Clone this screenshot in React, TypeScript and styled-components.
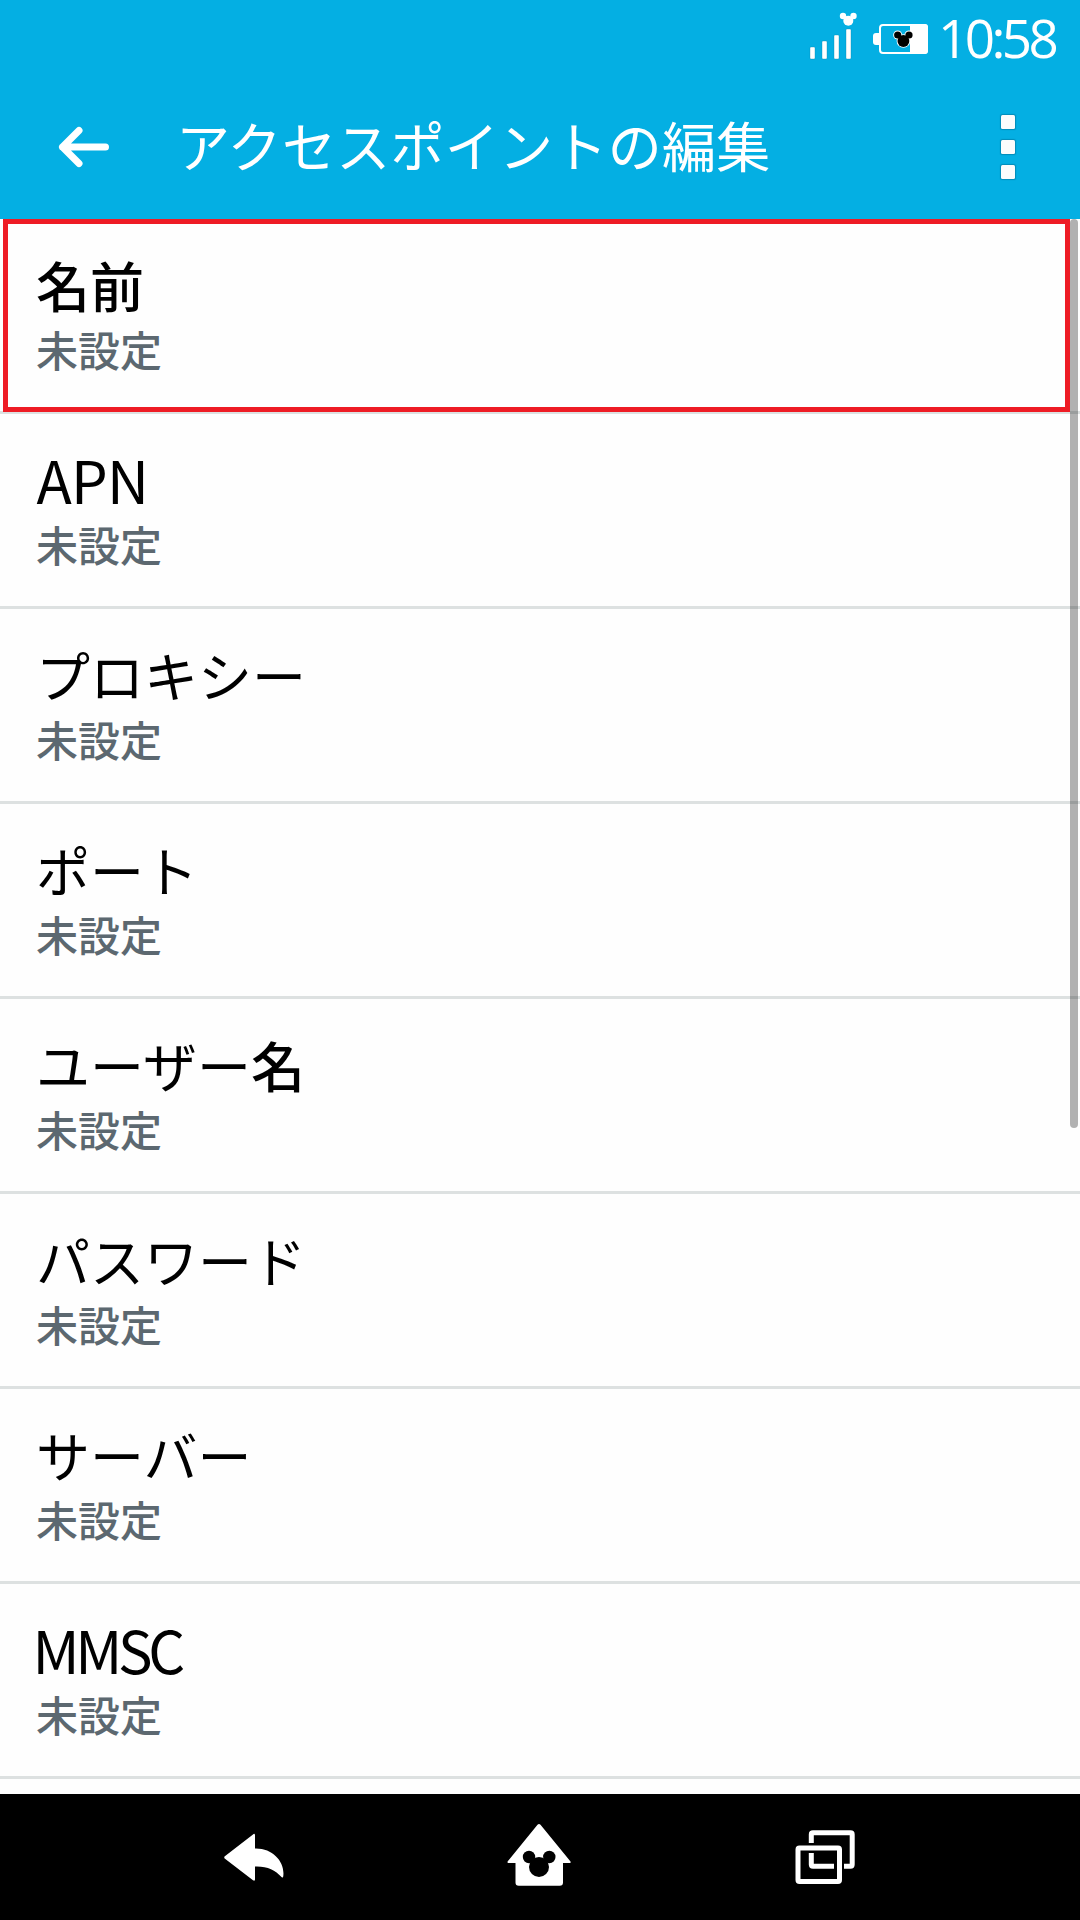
import React from "react";
import styled, { createGlobalStyle } from "styled-components";

const GlobalStyle = createGlobalStyle`
  html, body { margin: 0; padding: 0; background: #fefefe; }
  * { box-sizing: border-box; }
`;

const jp = `"Noto Sans CJK JP", "Noto Sans", sans-serif`;

const Screen = styled.div`
  display: flex;
  flex-direction: column;
  width: 1080px;
  height: 1920px;
  overflow: hidden;
  background: #fefefe;
  font-family: ${jp};
`;

const Header = styled.header`
  display: flex;
  flex-direction: column;
  flex: none;
  height: 219px;
  background: #04afe3;
  color: #fff;
`;

const StatusBar = styled.div`
  display: flex;
  align-items: flex-start;
  justify-content: flex-end;
  height: 74px;
  padding-right: 20px;
`;

const StatusIcons = styled.svg`
  display: block;
  flex: none;
`;

const Clock = styled.span`
  width: 123px;
  padding-left: 1px;
  font-family: "Open Sans", sans-serif;
  font-size: 53px;
  font-weight: 400;
  line-height: 76px;
  letter-spacing: -3.6px;
  white-space: nowrap;
`;

const TitleBar = styled.div`
  display: flex;
  align-items: center;
  height: 145px;
  padding: 0 65px 0 56px;
`;

const BackButton = styled.button`
  display: flex;
  width: 56px;
  height: 56px;
  padding: 0;
  border: 0;
  background: none;
`;

const Title = styled.h1`
  flex: 1;
  margin: 0 0 4px 64px;
  font-size: 54px;
  font-weight: 400;
  line-height: 64px;
  letter-spacing: 0.3px;
  white-space: nowrap;
`;

const MenuButton = styled.button`
  display: flex;
  flex-direction: column;
  gap: 11px;
  padding: 0;
  margin-top: 1px;
  border: 0;
  background: none;
`;

const Dot = styled.span`
  width: 14px;
  height: 14px;
  border-radius: 1.5px;
  background: #fcfcfc;
  box-shadow: 0 0 1px 1px rgba(0, 60, 90, 0.3);
`;

const List = styled.main`
  position: relative;
  flex: 1;
  min-height: 0;
  overflow: hidden;
`;

const Row = styled.div`
  display: flex;
  flex-direction: column;
  height: 195px;
  padding: 34px 36px 0;
  border-bottom: 3px solid #dde1e1;
`;

const Name = styled.span<{ $latin?: boolean; $spacing?: number; $shift?: number }>`
  margin-left: ${(p) => p.$shift ?? 0}px;
  margin-top: ${(p) => (p.$latin ? -1 : 0)}px;
  margin-bottom: ${(p) => (p.$latin ? 1 : 0)}px;
  font-size: ${(p) => (p.$latin ? 58 : 54)}px;
  line-height: 64px;
  letter-spacing: ${(p) => p.$spacing ?? 0}px;
  color: #000;
  white-space: nowrap;
`;

const Kanji = styled.span`
  font-weight: 500;
`;

const Value = styled.span`
  font-size: 42px;
  font-weight: 500;
  line-height: 64px;
  color: #5c6870;
  white-space: nowrap;
`;

const Highlight = styled.div`
  position: absolute;
  top: 0;
  left: 3px;
  width: 1067px;
  height: 193px;
  border: 5px solid #ee1c25;
`;

const ScrollThumb = styled.div`
  position: absolute;
  top: 0;
  right: 2px;
  width: 8px;
  height: 909px;
  border-radius: 4px;
  background: rgba(0, 0, 0, 0.3);
`;

const NavBar = styled.nav`
  display: flex;
  flex: none;
  justify-content: space-between;
  height: 126px;
  padding: 30px 223px 0 222px;
  background: #000;
`;

const NavButton = styled.button`
  display: flex;
  width: 64px;
  height: 64px;
  padding: 0;
  border: 0;
  background: none;
`;

const HomeButton = styled(NavButton)`
  margin-right: 1px;
`;

type Item = { name: string; kanji?: string; latin?: boolean; spacing?: number; shift?: number };

const items: Item[] = [
  { name: "", kanji: "名前" },
  { name: "APN", latin: true, spacing: -0.8, shift: 0.5 },
  { name: "プロキシー" },
  { name: "ポート" },
  { name: "ユーザー", kanji: "名" },
  { name: "パスワード" },
  { name: "サーバー" },
  { name: "MMSC", latin: true, spacing: -4.3, shift: -3.5 },
];

const bars = [
  { x: 20, y: 47 },
  { x: 32, y: 41 },
  { x: 44, y: 35 },
  { x: 56, y: 29 },
];

export default function App() {
  return (
    <Screen>
      <GlobalStyle />
      <Header>
        <StatusBar>
          <StatusIcons width="147" height="74" viewBox="0 0 147 74">
            <g fill="#fff" stroke="#0782a8" strokeOpacity="0.45" strokeWidth="0.8">
              {bars.map((b) => (
                <rect key={b.x} x={b.x} y={b.y} width="5" height={59 - b.y} rx="1" />
              ))}
            </g>
            <g fill="#fff">
              <circle cx="53" cy="16" r="3.2" />
              <circle cx="63.5" cy="16" r="3.2" />
              <circle cx="58.3" cy="20.7" r="5" />
            </g>
            <rect x="90" y="25" width="47" height="28" rx="3" fill="none" stroke="#fff" strokeWidth="2" />
            <path d="M120 24h15a3 3 0 0 1 3 3v24a3 3 0 0 1-3 3h-15z" fill="#fff" />
            <path d="M90 33h-4a3 3 0 0 0-3 3v6a3 3 0 0 0 3 3h4z" fill="#fff" />
            <g fill="#fff">
              <circle cx="107.7" cy="35" r="4.5" />
              <circle cx="119" cy="35" r="4.5" />
              <circle cx="113.4" cy="41" r="6.8" />
            </g>
            <g fill="#000">
              <circle cx="107.7" cy="35" r="3.6" />
              <circle cx="119" cy="35" r="3.6" />
              <circle cx="113.4" cy="41" r="5.9" />
            </g>
          </StatusIcons>
          <Clock>10:58</Clock>
        </StatusBar>
        <TitleBar>
          <BackButton aria-label="戻る">
            <svg width="56" height="56" viewBox="0 0 56 56">
              <path
                d="M23 12.5 6.5 29 23 45.5M6.5 29h43"
                transform="translate(0 -1)"
                fill="none"
                stroke="#fff"
                strokeWidth="7"
                strokeLinecap="round"
                strokeLinejoin="round"
              />
            </svg>
          </BackButton>
          <Title>アクセスポイントの編集</Title>
          <MenuButton aria-label="メニュー">
            <Dot />
            <Dot />
            <Dot />
          </MenuButton>
        </TitleBar>
      </Header>

      <List>
        {items.map((item) => (
          <Row key={item.name}>
            <Name $latin={item.latin} $spacing={item.spacing} $shift={item.shift}>
              {item.name}
              {item.kanji && <Kanji>{item.kanji}</Kanji>}
            </Name>
            <Value>未設定</Value>
          </Row>
        ))}
        <Highlight />
        <ScrollThumb />
      </List>

      <NavBar>
        <NavButton aria-label="戻る">
          <svg width="64" height="64" viewBox="0 0 64 64">
            <path
              d="M2.5 32.5 Q1.8 33.8 3 34.8 L31 56.3 Q33 57.3 33 55.5 V42.5 C45 42 53 46 59.5 53 Q61 54.5 61.3 52 C63 38 51 24 33 24.5 V11 Q32.6 9 31 10.5 Z"
              fill="#fff"
            />
          </svg>
        </NavButton>
        <HomeButton aria-label="ホーム">
          <svg width="64" height="64" viewBox="0 0 64 64">
            <path
              d="M30.5 .8Q32 -.8 33.5 .8L63.5 37.5Q64 39 62.5 39H56V58.5Q56 61.8 52.7 61.8H11.8Q8.5 61.8 8.5 58.5V39H1.5Q0 39 .6 37.5Z"
              fill="#fff"
            />
            <circle cx="22" cy="33" r="6.2" />
            <circle cx="42.3" cy="33" r="6.2" />
            <circle cx="32" cy="43" r="10" />
          </svg>
        </HomeButton>
        <NavButton aria-label="最近使ったアプリ">
          <svg width="64" height="64" viewBox="0 0 64 64" fill="none" stroke="#fff" strokeWidth="5">
            <rect x="5" y="24" width="41.5" height="33.5" rx="1.5" />
            <path d="M18.3 19V10.5Q18.3 8.8 20 8.8H57.5Q59.2 8.8 59.2 10.5V40.5Q59.2 42.2 57.5 42.2H51" />
            <path d="M18.3 29V40.5Q18.3 42.2 20 42.2H41" />
          </svg>
        </NavButton>
      </NavBar>
    </Screen>
  );
}
